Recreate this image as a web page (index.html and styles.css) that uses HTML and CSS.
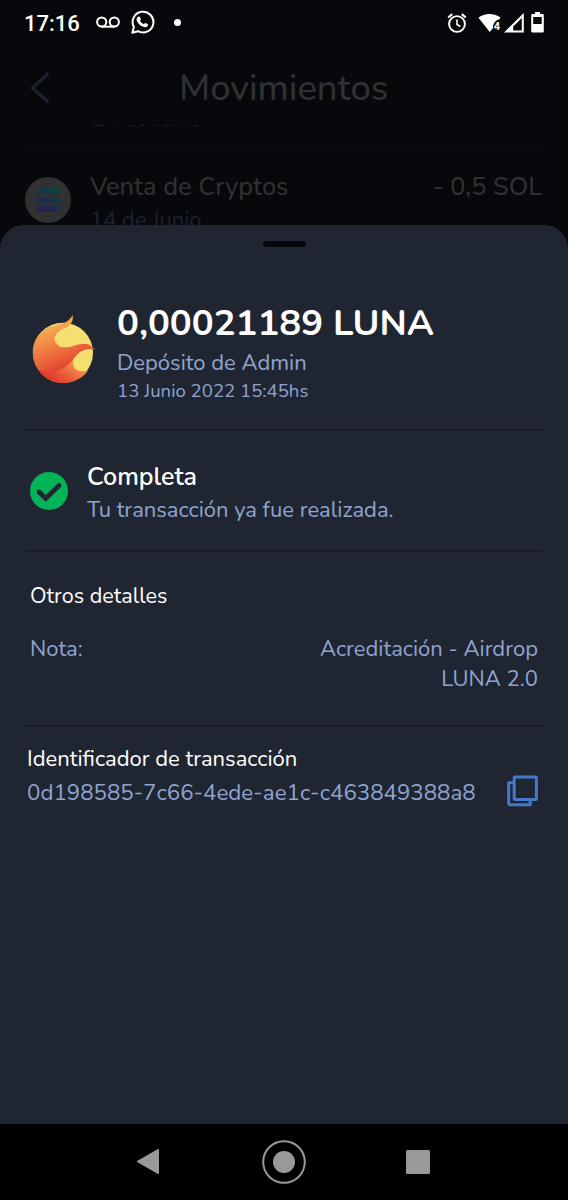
FILE: index.html
```html
<!DOCTYPE html>
<html lang="es">
<head>
<meta charset="utf-8">
<title>Movimientos</title>
<link rel="stylesheet" href="styles.css">
</head>
<body>
<div class="phone">
  <div class="status">
    <span class="clock">17:16</span>
    <svg class="voicemail" width="26" height="14" viewBox="0 0 26 14" fill="none" stroke="#fff" stroke-width="2"><circle cx="5.700" cy="6" r="4.600"/><circle cx="18.300" cy="6" r="4.600"/><path d="M5.500 10.700h13"/></svg>
    <svg class="whatsapp" width="24" height="26" viewBox="0 0 24 26"><path d="M1.300 22.800l1.600-5.700A10.400 10.400 0 1 1 7 21.200Z" fill="none" stroke="#fff" stroke-width="2" stroke-linejoin="round"/><path d="M7.200 6.800c.7-.6 1.400-.5 1.800.3l.8 1.800c.2.600-.5 1.200-.9 1.700.8 1.700 2.200 2.800 4 3.600.6-.5 1-1.400 1.700-1.200l2 .9c.6.400.4 1.300 0 2-.9 1.400-2.700 1.500-4.400.9-3.300-1.100-5.500-3.300-6.500-6.200-.4-1.500.300-3 1.500-3.800Z" fill="#fff"/></svg>
    <i class="dot"></i>
    <div class="system">
      <svg class="alarm" width="20" height="20" viewBox="0 0 20 20" fill="none" stroke="#fff"><circle cx="10" cy="11" r="7.900" stroke-width="1.900"/><path d="M10 6.500v5l3.300 2" stroke-width="1.600"/><path d="M1.200 4.500l4-3.400M18.800 4.500l-4-3.400" stroke-width="2.100"/></svg>
      <svg class="wifi" width="24" height="20" viewBox="0 0 24 20"><path d="M.5 4.800C6.500-.2 16.500-.2 22.500 4.800L21 6.500c-3.500.500-6 4-6 8.500L11.700 19Z" fill="#fff"/><text x="15.800" y="16.500" class="generation">4</text></svg>
      <svg class="signal" width="20" height="20" viewBox="0 0 20 20"><path fill="#fff" fill-rule="evenodd" d="M0 19.500L19.800 0v19.500ZM17.800 5L9.200 13.500v4h8.600Z"/></svg>
      <svg class="battery" width="13" height="21" viewBox="0 0 13 21"><path fill="#fff" fill-rule="evenodd" d="M4 0h5v2h2.500q1.300 0 1.300 1.300v15.900q0 1.300-1.300 1.300h-10Q.2 20.500.2 19.200V3.300Q.2 2 1.500 2H4ZM2.200 5v7h8.500V5Z"/></svg>
    </div>
  </div>

  <div class="app">
    <header class="topbar">
      <svg class="back" width="20" height="32" viewBox="0 0 20 32" fill="none" stroke="#1b212e" stroke-width="3.500"><path d="M18.500 1.200L2.500 16l16 14.500"/></svg>
      <h1>Movimientos</h1>
    </header>
    <div class="list">
      <div class="row previous"><span class="row-date">14 de Junio</span></div>
      <div class="row">
        <svg class="coin" width="46" height="46" viewBox="0 0 46 46">
          <defs><linearGradient id="sol" gradientUnits="userSpaceOnUse" x1="32" y1="10" x2="15" y2="36"><stop offset="0" stop-color="#08463b"/><stop offset=".5" stop-color="#1b304c"/><stop offset="1" stop-color="#2d1957"/></linearGradient></defs>
          <circle cx="23" cy="23" r="23" fill="#303131"/>
          <path fill="url(#sol)" d="M14 11h22.700L33 16.700H10ZM10 20h22.700l4 5.700H14ZM14 29h22.700L33 34.700H10Z"/>
        </svg>
        <div class="row-main"><span class="row-title">Venta de Cryptos</span><span class="row-date">14 de Junio</span></div>
        <span class="row-amount">- 0,5 SOL</span>
      </div>
    </div>

    <section class="sheet">
      <div class="handle"></div>
      <div class="summary">
        <svg class="luna" width="64" height="70" viewBox="0 0 64 70">
          <defs>
            <linearGradient id="flame" gradientUnits="userSpaceOnUse" x1="15" y1="12" x2="35" y2="60"><stop offset="0" stop-color="#f6ad52"/><stop offset=".5" stop-color="#ee713e"/><stop offset="1" stop-color="#dc332d"/></linearGradient>
            <linearGradient id="ember" gradientUnits="userSpaceOnUse" x1="45" y1="43" x2="27" y2="68"><stop offset="0" stop-color="#f7a351"/><stop offset="1" stop-color="#e33c30"/></linearGradient>
          </defs>
          <circle cx="31" cy="37.800" r="30" fill="#f5df70"/>
          <path fill="url(#ember)" d="M6 54C24 60 33 50 44 39C37 51 44 59 56 55.500C45 72 17 73 6 54Z"/>
          <path fill="url(#flame)" d="M40.500 0C42 7 38 11 33 13C24 16 18 25 27 31C38 36 46 26 57 29.500L63.500 34.500C49 32 45 40 38 48C26 60 15 58 6 54C-4 39 1 21 15 13C24 9 36 10 40.500 0Z"/>
        </svg>
        <div class="summary-copy">
          <h2>0,00021189 LUNA</h2>
          <p class="source">Depósito de Admin</p>
          <p class="date">13 Junio 2022 15:45hs</p>
        </div>
      </div>
      <div class="state">
        <svg class="check" width="38" height="38" viewBox="0 0 38 38"><circle cx="19" cy="19" r="19" fill="#03b357"/><path d="M9 20l6.800 6.500L29 13.500" fill="none" stroke="#1f2632" stroke-width="4.800" stroke-linecap="round"/></svg>
        <div class="state-copy"><h3>Completa</h3><p class="message">Tu transacción ya fue realizada.</p></div>
      </div>
      <div class="details">
        <h4 class="details-title">Otros detalles</h4>
        <div class="detail"><span class="note-label">Nota:</span><span class="note"><span class="note-main">Acreditación - Airdrop</span><span class="note-token">LUNA 2.0</span></span></div>
      </div>
      <div class="identifier">
        <div><h4 class="id-title">Identificador de transacción</h4><p class="id-value">0d198585-7c66-4ede-ae1c-c463849388a8</p></div>
        <svg class="copy" width="32" height="32" viewBox="0 0 32 32" fill="none" stroke="#4579cf" stroke-width="3" stroke-linejoin="round"><rect x="7.200" y="1.900" width="22.200" height="22.600" rx="1"/><path d="M7.200 7.800H1.700v20.500q0 1.500 1.500 1.500h20V24.500"/></svg>
      </div>
    </section>
  </div>

  <nav class="navbar">
    <svg width="24" height="28" viewBox="0 0 24 28"><path d="M22 2v23L2 13.500Z" fill="#999" stroke="#999" stroke-width="2" stroke-linejoin="round"/></svg>
    <svg class="home" width="44" height="44" viewBox="0 0 44 44"><circle cx="22" cy="22" r="20.800" fill="none" stroke="#999" stroke-width="2"/><circle cx="22" cy="22" r="11" fill="#999"/></svg>
    <svg width="24" height="24" viewBox="0 0 24 24"><rect width="24" height="24" rx="1.500" fill="#999"/></svg>
  </nav>
</div>
</body>
</html>
```
FILE: styles.css
```css
* { box-sizing: border-box; }
body { margin: 0; background: #000; }
h1, h2, h3, h4, p { margin: 0; font-weight: 400; }
svg { display: block; flex: none; }
.phone { width: 568px; height: 1200px; display: flex; flex-direction: column; overflow: hidden; background: #06080b; color: #fff; font-family: Nunito, Lato, sans-serif; white-space: nowrap; font-kerning: normal; }

.status { height: 46px; flex: none; display: flex; align-items: center; padding: 0 23px 1px 24px; font-family: Roboto, sans-serif; }
.clock { width: 72px; margin-top: 2px; font-size: 22px; font-weight: 500; }
.whatsapp { margin-left: 9px; }
.dot { width: 7px; height: 7px; border-radius: 50%; background: #fff; margin-left: 19px; }
.system { display: flex; align-items: center; margin-left: auto; padding-right: 1px; }
.wifi { margin-left: 11px; }
.generation { font: 700 11px Roboto, sans-serif; fill: #fff; }
.signal { margin-left: 2px; }
.battery { margin-left: 7px; }

.app { flex: 1; min-height: 0; position: relative; }
.topbar { height: 79px; display: flex; padding: 26px 0 0 30px; }
.topbar h1 { margin: -6px 0 0 129px; font-size: 36.300px; line-height: 44px; font-weight: 500; color: #303132; }
.list { height: 200px; overflow: hidden; padding: 0 25px; }
.row { height: 100px; display: flex; align-items: flex-start; padding-top: 26px; border-top: 1px solid #0b0d10; color: #303132; }
.previous { height: 24px; padding: 0 0 0 66px; border: 0; }
.previous .row-date { margin-top: -20px; }
.coin { margin-top: 1px; }
.row-main { display: flex; flex-direction: column; margin: -5px 0 0 19px; }
.row-title, .row-amount { font-size: 25.300px; line-height: 32px; font-weight: 500; }
.row-amount { margin: -5px 1px 0 auto; }
.row-date { font-size: 22px; line-height: 28px; color: #1d222e; }
.row-main .row-date { margin-top: 3px; }

.sheet { position: absolute; inset: 179px 0 0; border-radius: 24px 24px 0 0; background: #1f2632; padding: 0 25px; }
.handle { width: 43px; height: 6px; margin: 16px auto 0; border-radius: 3px; background: #06090c; }
.summary { height: 184px; display: flex; padding: 68px 0 0 7px; border-bottom: 2px solid #171c27; }
.summary-copy { margin: -13px 0 0 21px; }
h2 { font-size: 36.500px; line-height: 42px; font-weight: 700; }
.source { margin-top: 3px; font-size: 22px; line-height: 32px; }
.date { margin-top: -1px; font-size: 18.600px; line-height: 26px; }
.source, .date, .message, .detail, .id-value { color: #91a4d0; }
.state { height: 121px; display: flex; padding: 41px 0 0 5px; border-bottom: 2px solid #171c27; }
.state-copy { margin: -11px 0 0 19px; }
h3 { font-size: 25px; line-height: 32px; font-weight: 600; }
.message { margin-top: 1px; font-size: 22px; line-height: 32px; }
.details { height: 175px; padding: 29px 5px 0; border-bottom: 2px solid #171c27; }
.details-title, .detail, .id-title, .id-value { font-size: 22px; line-height: 30px; }
.details .details-title { font-size: 21.600px; }
.detail { display: flex; justify-content: space-between; margin-top: 23px; }
.note { display: flex; flex-direction: column; align-items: flex-end; }
.identifier { display: flex; justify-content: space-between; padding: 17px 4px 0 2px; }
.identifier .id-value { margin-top: 4px; font-size: 22.300px; }
.copy { margin-top: 31px; }

.navbar { height: 76px; flex: none; display: flex; justify-content: space-between; align-items: center; padding: 0 138px 0 136px; background: #000; }
.home { margin-left: 2px; }
```
